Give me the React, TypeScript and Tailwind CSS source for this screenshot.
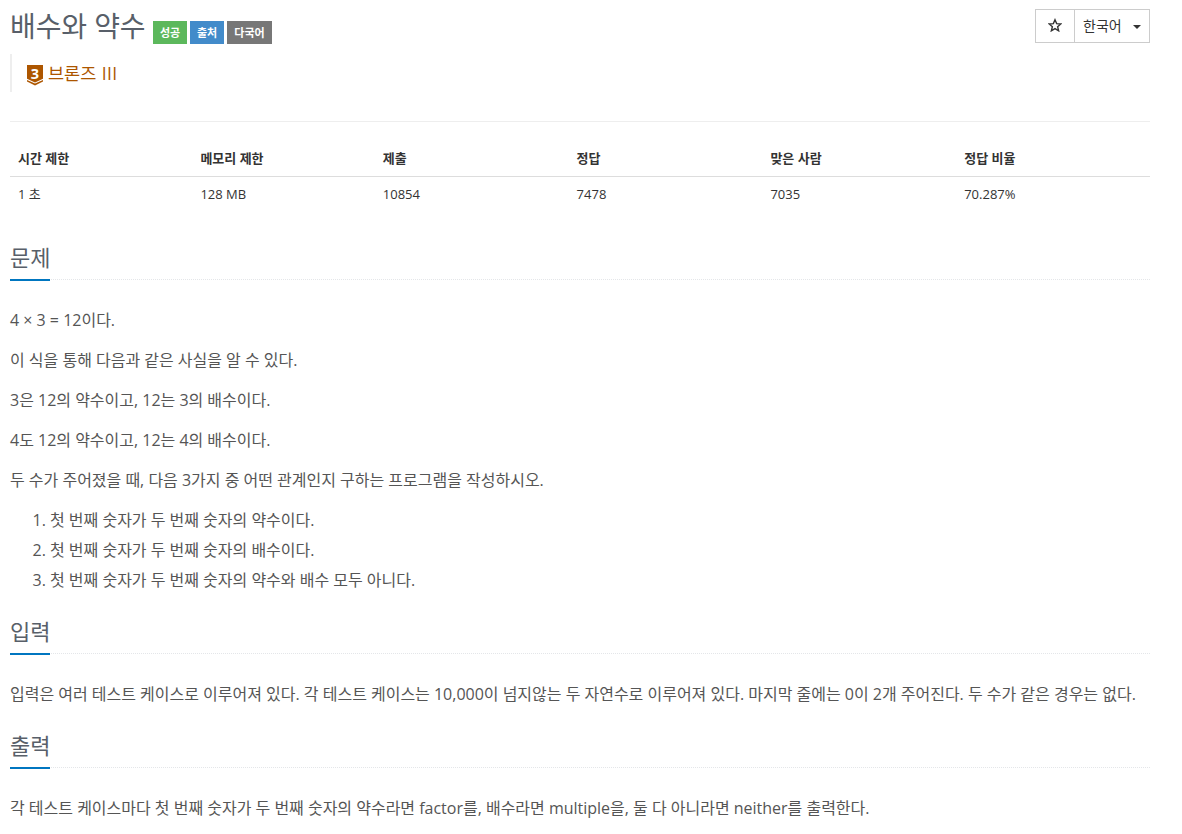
import type { ReactNode } from 'react';

const stats = [
  { label: '시간 제한', value: '1 초', width: 'w-[16%]' },
  { label: '메모리 제한', value: '128 MB', width: 'w-[16%]' },
  { label: '제출', value: '10854', width: 'w-[17%]' },
  { label: '정답', value: '7478', width: 'w-[17%]' },
  { label: '맞은 사람', value: '7035', width: 'w-[17%]' },
  { label: '정답 비율', value: '70.287%', width: 'w-[17%]' },
];

const labels = [
  { text: '성공', style: 'w-[34px] bg-[#5cb85c]' },
  { text: '출처', style: 'w-[34px] bg-[#428bca]' },
  { text: '다국어', style: 'w-[45px] bg-[#777777]' },
];

const relations = [
  '첫 번째 숫자가 두 번째 숫자의 약수이다.',
  '첫 번째 숫자가 두 번째 숫자의 배수이다.',
  '첫 번째 숫자가 두 번째 숫자의 약수와 배수 모두 아니다.',
];

function TierIcon() {
  return (
    <svg viewBox="0 0 16 21" className="mt-px h-[21px] w-4 overflow-visible">
      <path d="M0 0h16v13.8L8 17.4 0 13.8z" fill="#ad5600" />
      <path d="M0 14.9l8 3.6 8-3.6v1.5L8 20.6 0 16.4z" fill="#ad5600" />
      <text x="8" y="13.5" textAnchor="middle" fontSize="14.5" fontWeight="700" fill="#fff">
        3
      </text>
    </svg>
  );
}

function Section({ title, children }: { title: string; children: ReactNode }) {
  return (
    <section>
      <div className="mb-[25px] border-b border-dotted border-[#e4e6e9]">
        <h2 className="-mb-0.5 inline-block h-10 border-b-2 border-[#0076c0] text-[22px] leading-[33px] text-[#585f69]">
          {title}
        </h2>
      </div>
      <div className="space-y-2.5 text-base leading-[30px] tracking-[-0.01px]">{children}</div>
    </section>
  );
}

export default function App() {
  return (
    <div className="h-[834px] w-[1182px] overflow-hidden bg-white pl-2.5 font-['Open_Sans','Noto_Sans_CJK_KR',sans-serif] text-[#555555]">
      <div className="w-[1140px]">
        <header className="flex h-[54px] justify-between">
          <div className="flex">
            <h1 className="w-[143px] pt-1.5 text-[28px] leading-10 tracking-[-0.1px] text-[#585f69]">배수와 약수</h1>
            <div className="flex gap-[3px] pt-[21px]">
              {labels.map((label) => (
                <span
                  key={label.text}
                  className={`${label.style} h-[23px] text-center text-[11px] leading-[23px] font-bold text-white`}
                >
                  {label.text}
                </span>
              ))}
            </div>
          </div>
          <div className="mt-[9px] flex h-[34px] w-[115px] border border-[#cccccc] text-[#333333]">
            <button className="flex w-[39px] items-center justify-center border-r border-[#cccccc]">
              <svg
                viewBox="0 0 24 24"
                className="mr-px mb-0.5 h-3.5 w-3.5"
                fill="none"
                stroke="currentColor"
                strokeWidth="2.4"
              >
                <path d="M12 3l2.8 6.6 7.2.6-5.5 4.7 1.7 7L12 18.1l-6.2 3.8 1.7-7L2 10.2l7.2-.6z" />
              </svg>
            </button>
            <button className="flex flex-1 items-center justify-between pr-2 pl-2 text-sm">
              한국어
              <svg viewBox="0 0 8 4" className="mt-0.5 h-1 w-2" fill="currentColor">
                <path d="M0 0h8L4 4z" />
              </svg>
            </button>
          </div>
        </header>

        <div className="flex h-[38px] border-l-2 border-[#eeeeee] pt-2.5 pl-[15px] text-[17.5px] leading-[18px] text-[#ad5600]">
          <TierIcon />
          <span className="ml-[5px]">
            브론즈 <span className="ml-px tracking-[0.3px]">III</span>
          </span>
        </div>

        <hr className="mt-[29px] border-[#eeeeee]" />

        <table className="mt-[19px] w-full table-fixed text-left text-[13px] leading-[18px] text-[#333333]">
          <thead>
            <tr className="border-b border-[#dddddd]">
              {stats.map((stat) => (
                <th key={stat.label} className={`${stat.width} h-[35px] px-2 font-bold`}>
                  {stat.label}
                </th>
              ))}
            </tr>
          </thead>
          <tbody>
            <tr>
              {stats.map((stat) => (
                <td key={stat.label} className="h-[35px] px-2">
                  {stat.value}
                </td>
              ))}
            </tr>
          </tbody>
        </table>

        <main className="mt-[30px] space-y-5">
          <Section title="문제">
            <p>4 × 3 = 12이다.</p>
            <p>이 식을 통해 다음과 같은 사실을 알 수 있다.</p>
            <p>3은 12의 약수이고, 12는 3의 배수이다.</p>
            <p>4도 12의 약수이고, 12는 4의 배수이다.</p>
            <p>두 수가 주어졌을 때, 다음 3가지 중 어떤 관계인지 구하는 프로그램을 작성하시오.</p>
            <ol className="list-decimal pl-10">
              {relations.map((relation) => (
                <li key={relation}>{relation}</li>
              ))}
            </ol>
          </Section>
          <Section title="입력">
            <p className="whitespace-nowrap">
              입력은 여러 테스트 케이스로 이루어져 있다. 각 테스트 케이스는 10,000이 넘지않는 두 자연수로 이루어져 있다. 마지막 줄에는 0이 2개 주어진다. 두 수가 같은 경우는 없다.
            </p>
          </Section>
          <Section title="출력">
            <p>
              각 테스트 케이스마다 첫 번째 숫자가 두 번째 숫자의 약수라면 factor를, 배수라면 multiple을, 둘 다 아니라면 neither를 출력한다.
            </p>
          </Section>
        </main>
      </div>
    </div>
  );
}
